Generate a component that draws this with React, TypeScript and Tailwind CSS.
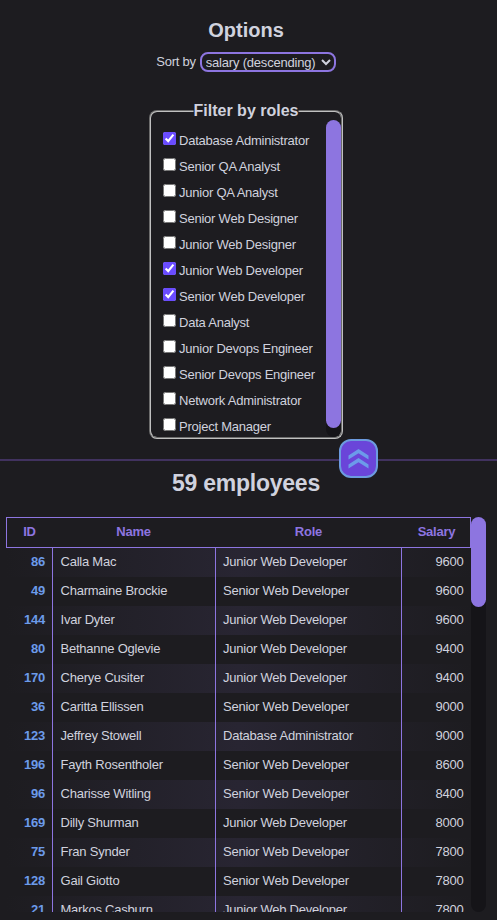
import { useState } from "react";

const roles: [string, boolean][] = [
  ["Database Administrator", true],
  ["Senior QA Analyst", false],
  ["Junior QA Analyst", false],
  ["Senior Web Designer", false],
  ["Junior Web Designer", false],
  ["Junior Web Developer", true],
  ["Senior Web Developer", true],
  ["Data Analyst", false],
  ["Junior Devops Engineer", false],
  ["Senior Devops Engineer", false],
  ["Network Administrator", false],
  ["Project Manager", false],
];

const employees: [number, string, string, number][] = [
  [86, "Calla Mac", "Junior Web Developer", 9600],
  [49, "Charmaine Brockie", "Senior Web Developer", 9600],
  [144, "Ivar Dyter", "Junior Web Developer", 9600],
  [80, "Bethanne Oglevie", "Junior Web Developer", 9400],
  [170, "Cherye Cusiter", "Junior Web Developer", 9400],
  [36, "Caritta Ellissen", "Senior Web Developer", 9000],
  [123, "Jeffrey Stowell", "Database Administrator", 9000],
  [196, "Fayth Rosentholer", "Senior Web Developer", 8600],
  [96, "Charisse Witling", "Senior Web Developer", 8400],
  [169, "Dilly Shurman", "Junior Web Developer", 8000],
  [75, "Fran Synder", "Senior Web Developer", 7800],
  [128, "Gail Giotto", "Senior Web Developer", 7800],
  [21, "Markos Casburn", "Junior Web Developer", 7800],
];

function Filters() {
  const [checked, setChecked] = useState(roles.map(([, on]) => on));
  return (
    <fieldset className="relative mt-[38px] ml-[149px] h-[329px] w-[194px] rounded-[8px] border-2 border-[#c0c0c0] [border-style:groove]">
      <legend className="absolute -top-[11px] left-1/2 -translate-x-1/2 bg-[#1d1c20] text-[16px] leading-[20px] font-bold tracking-normal whitespace-nowrap">
        Filter by roles
      </legend>
      <div className="flex h-full pt-[8px]">
        <ul className="flex-1 pl-[12px]">
          {roles.map(([name], i) => (
            <li key={name}>
              <label className="flex h-[26px] gap-[3px] whitespace-nowrap">
                <input
                  type="checkbox"
                  className="mt-[12px] size-[13px] shrink-0 accent-[#6a4cff]"
                  checked={checked[i]}
                  onChange={() => setChecked(checked.map((c, j) => (j === i ? !c : c)))}
                />
                <span className="pt-[13px] leading-[16px]">{name}</span>
              </label>
            </li>
          ))}
        </ul>
        <div className="h-[317px] w-[15px] rounded-full bg-[#151418]">
          <div className="h-[308px] rounded-full bg-[#8d75e0]" />
        </div>
      </div>
    </fieldset>
  );
}

function EmployeeTable() {
  return (
    <div className="ml-[6px] flex h-[395px] w-[480px] overflow-hidden">
      <div className="w-[465px] shrink-0">
        <div className="grid h-[31px] grid-cols-[45px_163px_186px_69px] border border-[#8d75e0] text-center leading-[28px] font-bold text-[#8d75e0]">
          <div>ID</div>
          <div>Name</div>
          <div className="pl-px">Role</div>
          <div className="pl-[2px]">Salary</div>
        </div>
        {employees.map(([id, name, role, salary], i) => (
          <div
            key={id}
            className={`grid h-[29px] grid-cols-[47px_163px_186px_69px] leading-[27px] whitespace-nowrap ${
              i % 2 === 0 ? "bg-linear-to-r from-[#1d1c20] via-[#282532] to-[#1d1c20]" : ""
            }`}
          >
            <div className="border-r border-[#8d75e0] pr-[7px] text-right font-bold text-[#6c9bea]">{id}</div>
            <div className="border-r border-[#8d75e0] pl-[7.5px]">{name}</div>
            <div className="border-r border-[#8d75e0] pl-[7px]">{role}</div>
            <div className="pr-[7.5px] text-right">{salary}</div>
          </div>
        ))}
      </div>
      <div className="w-[15px] rounded-full bg-[#151418]">
        <div className="h-[90px] rounded-full bg-[#8d75e0]" />
      </div>
    </div>
  );
}

export default function App() {
  return (
    <div className="h-[920px] w-[497px] overflow-hidden bg-[#1d1c20] font-['Liberation_Sans',Arial,sans-serif] text-[13px] tracking-[-0.23px] text-[#d0d2de]">
      <section className="relative h-[461px] border-b-2 border-[#41325f] pt-[18px]">
        <h2 className="pr-[5px] text-center text-[20px] leading-[24px] font-bold tracking-normal">Options</h2>
        <div className="mt-[10px] flex h-[20px] justify-center gap-[4px] pr-[5px]">
          <span className="leading-[20px]">Sort by</span>
          <select className="h-[20px] w-[136px] rounded-[8px] border-2 border-[#8d75e0] bg-[#1d1c20] pr-px text-[13px] tracking-[-0.2px]">
            <option>salary (descending)</option>
          </select>
        </div>
        <Filters />
        <button className="absolute top-[439px] left-[339px] flex size-[39px] items-center justify-center rounded-[12px] border-2 border-[#6c9bdf] bg-[#6a45d9]">
          <svg width="21" height="20" viewBox="0 0 21 20" fill="#6c9bea">
            <path d="M10.5 0 20.5 6.5V10.5L10.5 4.2.5 10.5V6.5Z" />
            <path d="M10.5 9 20.5 15.5V19.5L10.5 13.2.5 19.5V15.5Z" />
          </svg>
        </button>
      </section>
      <h2 className="mb-[20px] pt-[8px] pr-[5px] text-center text-[23px] leading-[28px] font-bold tracking-[-0.25px]">
        59 employees
      </h2>
      <EmployeeTable />
    </div>
  );
}
